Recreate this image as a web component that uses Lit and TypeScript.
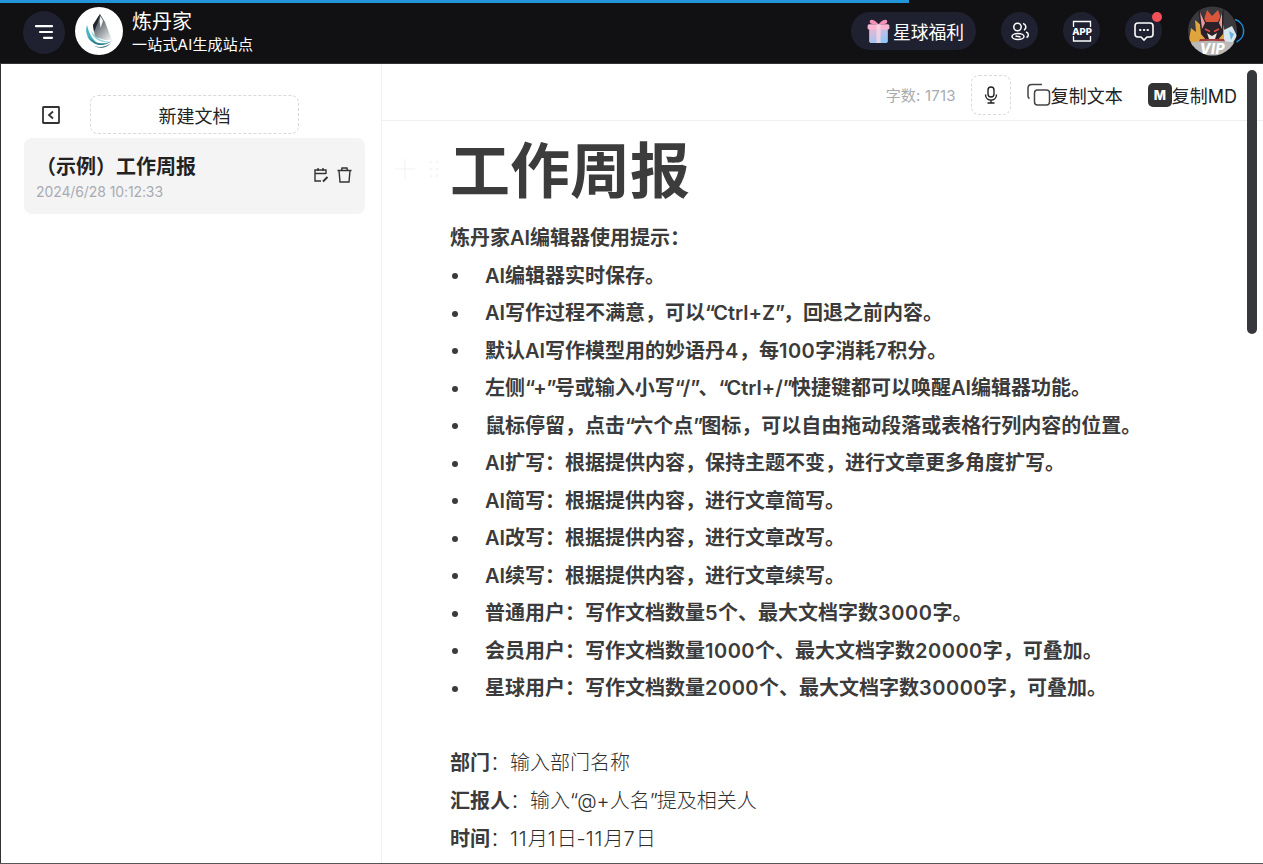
import { LitElement, html, css, svg } from "lit";
import { customElement } from "lit/decorators.js";

const tips = [
  "AI编辑器实时保存。",
  "AI写作过程不满意，可以“Ctrl+Z”，回退之前内容。",
  "默认AI写作模型用的妙语丹4，每100字消耗7积分。",
  "左侧“+”号或输入小写“/”、“Ctrl+/”快捷键都可以唤醒AI编辑器功能。",
  "鼠标停留，点击“六个点”图标，可以自由拖动段落或表格行列内容的位置。",
  "AI扩写：根据提供内容，保持主题不变，进行文章更多角度扩写。",
  "AI简写：根据提供内容，进行文章简写。",
  "AI改写：根据提供内容，进行文章改写。",
  "AI续写：根据提供内容，进行文章续写。",
  "普通用户：写作文档数量5个、最大文档字数3000字。",
  "会员用户：写作文档数量1000个、最大文档字数20000字，可叠加。",
  "星球用户：写作文档数量2000个、最大文档字数30000字，可叠加。",
];

/* The original's Latin fallback sets quotes tighter and digits wider than Inter. */
const tune = (text: string) =>
  text.split(/([“”]|\d+)/).map((part) =>
    part === "“" || part === "”"
      ? html`<span class="q">${part}</span>`
      : /^\d+$/.test(part)
      ? html`<span class="n">${part}</span>`
      : part
  );

const logo = svg`<svg class="logo-art" viewBox="0 0 48 48">
  <defs>
    <linearGradient id="cr" x1="0.1" y1="0" x2="0.9" y2="1"><stop offset="0" stop-color="#2f363c"/><stop offset="0.45" stop-color="#7c8388"/><stop offset="1" stop-color="#eef0f1"/></linearGradient>
  </defs>
  <circle cx="24" cy="24" r="24" fill="#fff"/>
  <path d="M25 7 L18 18 L20 30 L30 33 L37 33 L30 15Z" fill="url(#cr)"/>
  <path d="M25 7 L18 18 L19 25 L23 15Z" fill="#1f252a"/>
  <path d="M25.500 9 L28 14 L25.500 21 L24.500 14Z" fill="#f5f6f7"/>
  <path d="M12 18 C9 27 14 34 24 38 C18 33 14 27 12 18Z" fill="#45b3bd"/>
  <path d="M16 23 C17 31 24 36 35 35 C26 34 20 31 16 23Z" fill="#8fd3d8"/>
  <path d="M12 29 C17 38 28 42 38 33 C31 38 21 38 12 29Z" fill="#2a7f8c"/>
  <path d="M19 39 C25 42 32 41 36 36 C31 40 25 41 19 39Z" fill="#1a4f5c"/>
</svg>`;

const avatar = svg`<svg class="avatar-art" viewBox="0 0 58 50">
  <defs><clipPath id="av"><circle cx="24.500" cy="25" r="24.500"/></clipPath></defs>
  <g clip-path="url(#av)">
    <rect width="50" height="50" fill="#3a3a3e"/>
    <path d="M0 40 L3 22 L8 26 L7 14 L14 20 L19 8 L24 14 L30 8 L35 18 L38 30 L36 40Z" fill="#e0a43f"/>
    <path d="M16 14 L19 4 L24 10 L30 4 L34 15 L30 22 L19 22Z" fill="#d9563a"/>
    <path d="M36 24 L44 20 L49 30 L44 38 L36 38Z" fill="#d6e7f1"/>
    <path d="M41 25 L46 28 L43 34Z" fill="#6fb3dc"/>
    <path d="M10 2 L18 16 L30 16 L36 3 L35 28 L29 35 L19 35 L13 28Z" fill="#2a2228"/>
    <path d="M12 6 L17 17 L14 23Z M34 7 L31 17 L34 23Z" fill="#e79a9c"/>
    <path d="M19 27 L24 30 L29 27 L27 33 L24 34 L21 33Z" fill="#e9e4e2"/>
    <path d="M17 23 L22 25.500 M31 23 L26 25.500" stroke="#e24a4a" stroke-width="1.500"/>
    <path d="M12 33 H36 L38 38 H10Z" fill="#a2383a"/>
    <path d="M0 37 C14 34 34 34 50 37 V50 H0Z" fill="#b9b9b9"/>
    <text x="24.500" y="48" text-anchor="middle" font-size="14" font-weight="800" font-style="italic" fill="#fff" font-family="Inter" letter-spacing="0.500">VIP</text>
  </g>
  <path d="M47 13.500 A12 12 0 0 1 48.500 36" fill="none" stroke="#1f8fd6" stroke-width="1.500"/>
</svg>`;

@customElement("app-root")
export class AppRoot extends LitElement {
  static styles = css`
    :host {
      display: block;
      width: 1263px;
      height: 864px;
      overflow: hidden;
      position: relative;
      box-sizing: border-box;
      font-family: Inter, "Noto Sans CJK SC", sans-serif;
      color: #333;
      background: #fff;
    }
    * { box-sizing: border-box; }
    .progress {
      position: absolute;
      left: 0; top: 0;
      width: 909px; height: 3px;
      background: #2196db;
    }
    header {
      height: 64px;
      background: #111114;
      display: flex;
      align-items: center;
      padding: 0 18px 2px 23px;
      border-bottom: 1px solid #333;
      color: #fff;
    }
    .round {
      border-radius: 50%;
      background: #1f2130;
      display: flex;
      align-items: center;
      justify-content: center;
      flex: none;
    }
    .menu { width: 42px; height: 43px; margin-top: 3px; }
    .logo-art { width: 48px; height: 48px; margin-left: 10px; display: block; flex: none; }
    .brand { margin-left: 9px; display: flex; flex-direction: column; margin-top: 3px; }
    .brand b { font-weight: 400; font-size: 20px; line-height: 26px; }
    .brand span { font-size: 15px; line-height: 20px; letter-spacing: 0.2px; }
    .spacer { flex: 1; }
    .gift {
      height: 38px;
      width: 125px;
      border-radius: 19px;
      background: #1f2130;
      display: flex;
      align-items: center;
      padding-left: 15px;
      font-size: 17.8px;
      flex: none;
      white-space: nowrap;
    }
    .gift svg { width: 25px; height: 27px; margin-right: 2px; flex: none; }
    .h-ic { width: 37px; height: 37px; margin-left: 25px; position: relative; }
    .dot {
      position: absolute;
      width: 10px; height: 10px;
      border-radius: 50%;
      background: #f4505a;
      right: 0; top: 0;
    }
    .avatar-art { width: 58px; height: 50px; margin-left: 26px; margin-right: -1px; flex: none; display: block; }
    .body { display: flex; height: 800px; border-left: 1px solid #333; }
    aside {
      width: 381px;
      flex: none;
      border-right: 1px solid #f2f2f2;
      padding: 31px 16px 0 23px;
    }
    .side-top { display: flex; align-items: center; height: 39px; }
    .side-top svg { width: 20px; height: 20px; margin-left: 17px; flex: none; }
    .new {
      margin-left: 29px;
      width: 209px;
      height: 39px;
      border: 1px dashed #d9d9d9;
      border-radius: 8px;
      display: flex;
      align-items: center;
      justify-content: center;
      font-size: 18px;
      color: #222;
    }
    .doc {
      margin-top: 4px;
      height: 76px;
      background: #f4f4f4;
      border-radius: 8px;
      padding: 15px 12px 0 12px;
      position: relative;
    }
    .doc b { display: block; font-size: 20px; line-height: 29px; color: #222; font-weight: 700; }
    .doc span { display: block; font-size: 14px; line-height: 18px; margin-top: 1px; color: #a8abb2; letter-spacing: -0.1px; }
    .doc-actions { position: absolute; right: 12px; top: 28px; display: flex; gap: 6px; }
    .doc-actions svg { width: 17px; height: 18px; display: block; }
    main { flex: 1; min-width: 0; position: relative; overflow: hidden; }
    .toolbar {
      height: 57px;
      border-bottom: 1px solid #efefef;
      display: flex;
      align-items: center;
      padding: 5px 26px 0 0;
      justify-content: flex-end;
      font-size: 18px;
      color: #222;
    }
    .count { font-size: 15px; letter-spacing: 0.2px; color: #a8abb2; margin-right: 15px; }
    .mic {
      width: 40px; height: 40px;
      border: 1px dashed #d9d9d9;
      border-radius: 8px;
      display: flex; align-items: center; justify-content: center;
      margin-right: 16px;
    }
    .mic svg { width: 20px; height: 20px; }
    .tool { display: flex; align-items: center; }
    .tool svg { flex: none; }
    .copy svg { width: 24px; height: 24px; }
    .md { margin-left: 25px; }
    .md svg { width: 24px; height: 24px; }
    .editor { padding: 11px 0 0 68px; color: #3b3b3b; }
    h1 {
      margin: 0;
      font-size: 60px;
      line-height: 78px;
      font-weight: 700;
      color: #3c3c3c;
    }
    .lead { font-size: 20px; font-weight: 600; line-height: 37.5px; margin-top: 10px; }
    ul { list-style: none; margin: 0; padding: 0; }
    li {
      display: flex;
      font-size: 20px;
      font-weight: 600;
      line-height: 37.5px;
      white-space: nowrap;
    }
    li > span.t { display: block; }
    .q { letter-spacing: -2px; }
    .n { letter-spacing: 0.5px; }
    li i {
      width: 35px;
      flex: none;
      display: flex;
      align-items: center;
    }
    li i::before {
      content: "";
      display: block;
      width: 6px; height: 6px;
      border-radius: 50%;
      background: #3b3b3b;
      margin-left: 2px;
    }
    .meta { margin-top: 36px; }
    .meta div { font-size: 20px; line-height: 38px; font-weight: 300; color: #2e2e2e; }
    .meta b { font-weight: 600; color: #3b3b3b; }
    .meta .q { letter-spacing: -1px; }
    .meta .n { letter-spacing: 1px; }
    .gutter {
      position: absolute;
      left: 13px;
      top: 95px;
      display: flex;
      align-items: center;
      gap: 13px;
    }
    .gutter svg { display: block; }
    .scroll {
      position: absolute;
      right: 6px;
      top: 6px;
      width: 10px;
      height: 264px;
      border-radius: 5px;
      background: #36373c;
    }
    .edge {
      position: absolute;
      left: 0; right: 0; bottom: 0;
      height: 1px;
      background: #555;
    }
  `;

  render() {
    return html`
      <header>
        <div class="round menu">
          <svg width="20" height="16" viewBox="0 0 20 16" fill="none" stroke="#fff" stroke-width="2.200" stroke-linecap="round">
            <path d="M2 2.200H18M6 8H18M10 13.800H18"/>
          </svg>
        </div>
        ${logo}
        <div class="brand"><b>炼丹家</b><span>一站式AI生成站点</span></div>
        <div class="spacer"></div>
        <div class="gift">
          <svg viewBox="0 0 24 26">
            <defs><linearGradient id="g" x1="0" y1="0" x2="0.6" y2="1"><stop offset="0" stop-color="#f9b4cf"/><stop offset="1" stop-color="#8fc8f7"/></linearGradient></defs>
            <path d="M3 10H21V23C21 24.500 20 25 19 25H5C4 25 3 24.500 3 23Z" fill="url(#g)"/>
            <rect x="1.500" y="7" width="21" height="5" rx="1.500" fill="#f8b7d2"/>
            <path d="M12 7C7 1 2 2 4 6 5 7 9 7 12 7ZM12 7C17 1 22 2 20 6 19 7 15 7 12 7Z" fill="#f690b6"/>
            <rect x="10" y="7" width="4" height="18" fill="#fbd5e4" opacity="0.800"/>
          </svg>星球福利
        </div>
        <div class="round h-ic">
          <svg width="22" height="22" viewBox="0 0 22 22" fill="none" stroke="#fff" stroke-width="1.500">
            <circle cx="8.500" cy="7" r="3.700"/>
            <ellipse cx="9" cy="16.500" rx="6" ry="3"/>
            <path d="M6.500 16L11.500 17"/>
            <path d="M14 3.500A3.500 3.500 0 0 1 15 10M17 12C20 13 20 16.500 17.500 17.500"/>
          </svg>
        </div>
        <div class="round h-ic">
          <svg width="24" height="24" viewBox="0 0 24 24" fill="none" stroke="#fff" stroke-width="1.300">
            <path d="M3.500 8V2.500H20.500V8M3.500 17V22H20.500V17"/>
            <text x="12" y="16" text-anchor="middle" font-size="9.500" font-weight="800" fill="#fff" stroke="none" font-family="Inter">APP</text>
          </svg>
        </div>
        <div class="round h-ic">
          <svg width="22" height="22" viewBox="0 0 22 22" fill="none" stroke="#fff" stroke-width="1.600">
            <path d="M5 3H17C19 3 20 4 20 6V14C20 16 19 17 17 17H14L11 20 8 17H5C3 17 2 16 2 14V6C2 4 3 3 5 3Z"/>
            <path d="M7 10H7.500M10.800 10H11.300M14.500 10H15" stroke-linecap="round" stroke-width="2"/>
          </svg>
          <span class="dot"></span>
        </div>
        ${avatar}
      </header>
      <div class="progress"></div>
      <div class="body">
        <aside>
          <div class="side-top">
            <svg viewBox="0 0 20 20" fill="none" stroke="#333" stroke-width="1.800">
              <rect x="2" y="2" width="16" height="16" rx="0.500"/>
              <path d="M12 6.500L8 10L12 13.500"/>
            </svg>
            <div class="new">新建文档</div>
          </div>
          <div class="doc">
            <b>（示例）工作周报</b>
            <span>2024/6/28 10:12:33</span>
            <div class="doc-actions">
              <svg viewBox="0 0 17 18" fill="none" stroke="#333" stroke-width="1.400">
                <path d="M13 8V4H2V15H8M2 7.500H13M5 2V5M10 2V5"/>
                <path d="M10 15.500L14.500 11" stroke-width="2"/>
              </svg>
              <svg viewBox="0 0 17 18" fill="none" stroke="#333" stroke-width="1.400">
                <path d="M1.500 4.500H15.500M5.500 4.500L6 2H11L11.500 4.500M3 4.500L4 16H13L14 4.500"/>
              </svg>
            </div>
          </div>
        </aside>
        <main>
          <div class="toolbar">
            <span class="count">字数: 1713</span>
            <div class="mic">
              <svg viewBox="0 0 20 20" fill="none" stroke="#222" stroke-width="1.400">
                <rect x="7" y="2" width="6" height="10" rx="3"/>
                <path d="M4.500 9.500C4.500 17 15.500 17 15.500 9.500M10 15V18M6.500 18H13.500"/>
              </svg>
            </div>
            <div class="tool copy">
              <svg viewBox="0 0 24 24" fill="none" stroke="#444" stroke-width="1.500">
                <rect x="7.500" y="7" width="15" height="15" rx="3"/>
                <path d="M15 1.500H5C2.500 1.500 1 3 1 5V13C1 14 1.500 15 2.500 15.500"/>
              </svg>复制文本
            </div>
            <div class="tool md">
              <svg viewBox="0 0 24 24">
                <rect width="24" height="24" rx="5" fill="#333"/>
                <text x="12" y="17" text-anchor="middle" font-size="13" font-weight="800" fill="#fff" font-family="Inter">M</text>
              </svg>复制MD
            </div>
          </div>
          <div class="gutter">
            <svg width="20" height="20" viewBox="0 0 20 20" stroke="#f6f6f6" stroke-width="1.500"><path d="M10 0V20M0 10H20"/></svg>
            <svg width="12" height="20" viewBox="0 0 12 20" fill="#f6f6f6"><circle cx="3" cy="3" r="1.500"/><circle cx="9" cy="3" r="1.500"/><circle cx="3" cy="10" r="1.500"/><circle cx="9" cy="10" r="1.500"/><circle cx="3" cy="17" r="1.500"/><circle cx="9" cy="17" r="1.500"/></svg>
          </div>
          <div class="editor">
            <h1>工作周报</h1>
            <div class="lead">炼丹家AI编辑器使用提示：</div>
            <ul>${tips.map((t) => html`<li><i></i><span class="t">${tune(t)}</span></li>`)}</ul>
            <div class="meta">
              <div><b>部门</b>：输入部门名称</div>
              <div><b>汇报人</b>：${tune("输入“@+人名”提及相关人")}</div>
              <div><b>时间</b>：${tune("11月1日-11月7日")}</div>
            </div>
          </div>
          <div class="scroll"></div>
        </main>
      </div>
      <div class="edge"></div>
    `;
  }
}
